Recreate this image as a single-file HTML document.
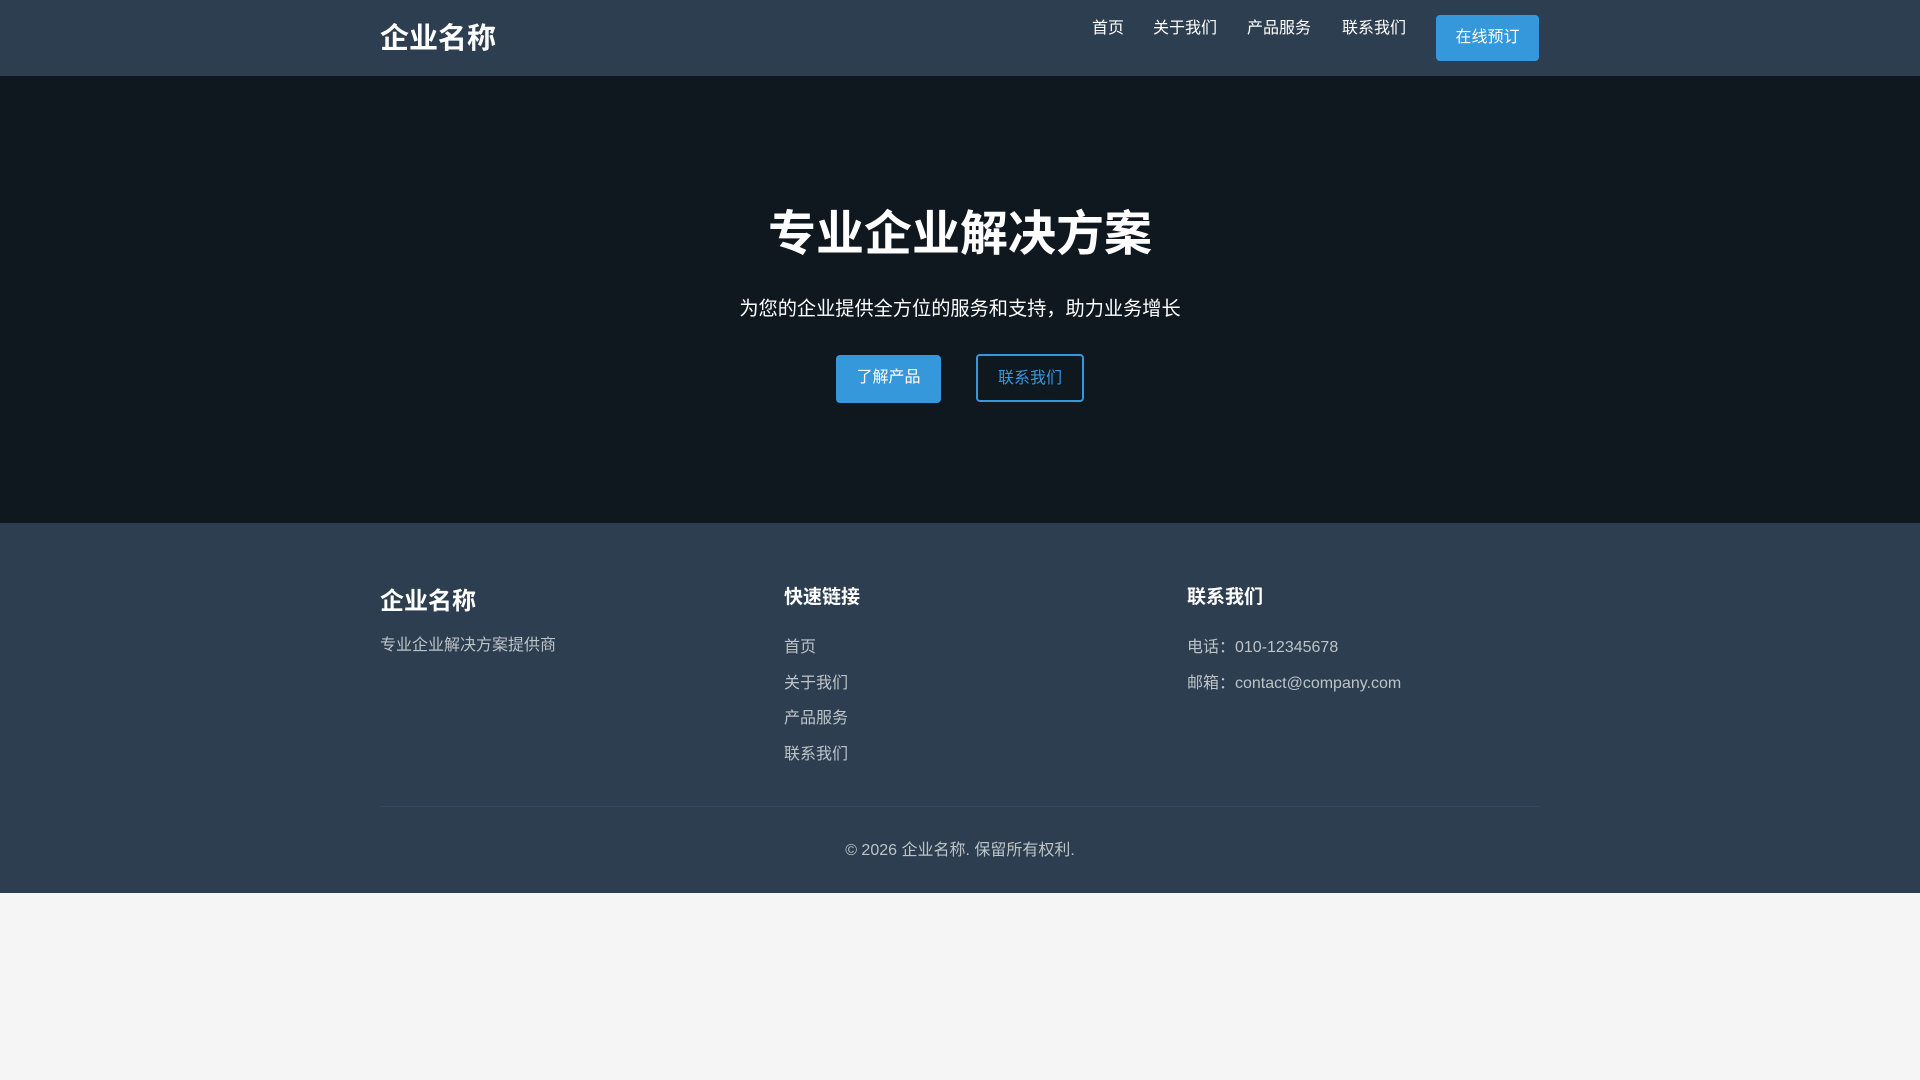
<!DOCTYPE html>
<html><head><meta charset="utf-8"><style>
*{margin:0;padding:0;box-sizing:border-box}
body{width:1920px;height:1080px;background:#f5f5f5;font-family:"Liberation Sans","Noto Sans CJK SC",sans-serif;position:relative;overflow:hidden}
.hdr{position:absolute;left:0;top:0;width:1920px;height:76px;background:#2c3e50}
.logo{position:absolute;left:380px;top:19px;font-size:29px;font-weight:bold;color:#fff;line-height:40px}
.nav{position:absolute;top:18px;font-size:16px;color:#fff;line-height:22px}
.btn1{position:absolute;left:1436px;top:15px;width:103px;height:46px;background:#3498db;border-radius:4px;color:#fff;font-size:16px;line-height:46px;text-align:center}
.hero{position:absolute;left:0;top:76px;width:1920px;height:447px;background:#0f171f}
.h1{position:absolute;left:0;width:1920px;top:127px;text-align:center;color:#fff;font-size:48px;font-weight:bold;line-height:64px}
.sub{position:absolute;left:0;width:1920px;top:220px;text-align:center;color:#fff;font-size:19.2px;line-height:28px}
.b{position:absolute;height:48px;font-size:16px;line-height:48px;text-align:center;border-radius:4px}
.ft{position:absolute;left:0;top:523px;width:1920px;height:370px;background:#2c3e50}
.t{position:absolute;color:#bdc3c7;font-size:16px;line-height:22px}
.w{position:absolute;color:#fff;font-weight:bold}
</style></head><body>
<div class="hdr">
<div class="logo">企业名称</div>
<div class="nav" style="left:1092px">首页</div>
<div class="nav" style="left:1153px">关于我们</div>
<div class="nav" style="left:1247px">产品服务</div>
<div class="nav" style="left:1342px">联系我们</div>
<div class="btn1">在线预订</div>
</div>
<div class="hero">
<div class="h1">专业企业解决方案</div>
<div class="sub">为您的企业提供全方位的服务和支持，助力业务增长</div>
<div class="b" style="left:836px;width:105px;background:#3498db;color:#fff;top:279px;line-height:46px">了解产品</div>
<div class="b" style="left:976px;width:108px;border:2px solid #3498db;color:#3498db;line-height:46px;top:278px">联系我们</div>
</div>
<div class="ft">
<div class="w" style="left:380px;top:62px;font-size:24px;line-height:34px">企业名称</div>
<div class="t" style="left:380px;top:112px">专业企业解决方案提供商</div>
<div class="w" style="left:784px;top:61px;font-size:19px;line-height:28px">快速链接</div>
<div class="t" style="left:784px;top:114px">首页</div>
<div class="t" style="left:784px;top:150px">关于我们</div>
<div class="t" style="left:784px;top:185px">产品服务</div>
<div class="t" style="left:784px;top:221px">联系我们</div>
<div class="w" style="left:1187px;top:61px;font-size:19px;line-height:28px">联系我们</div>
<div class="t" style="left:1187px;top:114px">电话：010-12345678</div>
<div class="t" style="left:1187px;top:150px">邮箱：contact@company.com</div>
<div style="position:absolute;left:380px;top:283px;width:1160px;height:1px;background:#34495e"></div>
<div class="t" style="left:0;width:1920px;text-align:center;top:317px">© 2026 企业名称. 保留所有权利.</div>
</div>
</body></html>
